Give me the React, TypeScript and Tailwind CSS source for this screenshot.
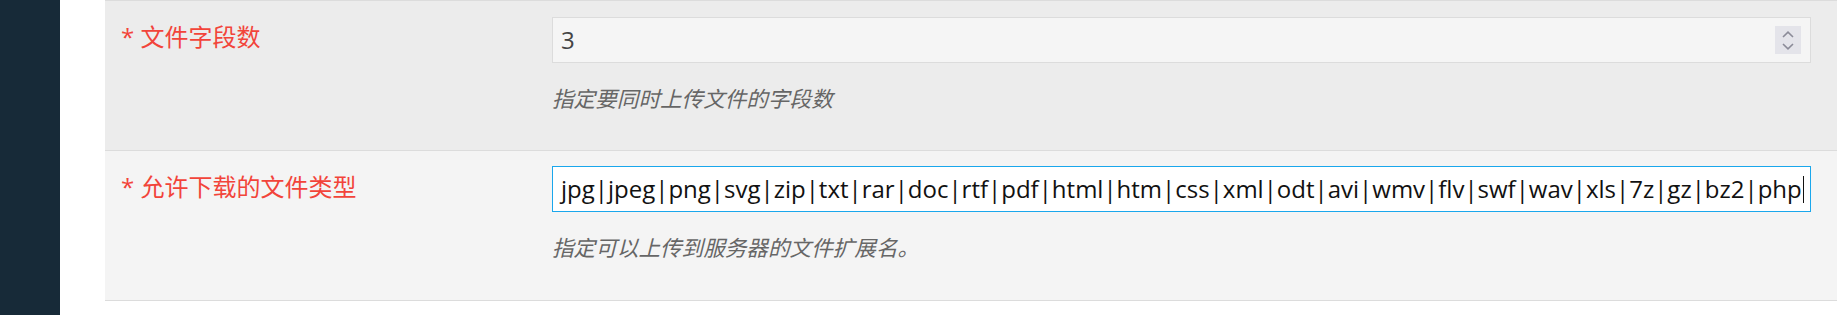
import React from "react";

const FONT = { fontFamily: '"Open Sans", "Noto Sans CJK SC", sans-serif' };

function Spinner() {
  return (
    <div className="absolute right-[9px] top-1/2 flex h-[28px] w-[26px] -translate-y-1/2 flex-col items-center justify-center gap-[5px] bg-[#e4e4ea]">
      <svg width="12" height="7" viewBox="0 0 12 7" fill="none">
        <path d="M1 6 L6 1.2 L11 6" stroke="#8b8b98" strokeWidth="1.6" />
      </svg>
      <svg width="12" height="7" viewBox="0 0 12 7" fill="none">
        <path d="M1 1 L6 5.8 L11 1" stroke="#8b8b98" strokeWidth="1.6" />
      </svg>
    </div>
  );
}

export default function App() {
  const types =
    "jpg|jpeg|png|svg|zip|txt|rar|doc|rtf|pdf|html|htm|css|xml|odt|avi|wmv|flv|swf|wav|xls|7z|gz|bz2|php";
  return (
    <div className="flex h-[315px] w-full bg-white" style={FONT}>
      <div className="h-full w-[60px] shrink-0 bg-[#172a38]" />
      <div className="w-[45px] shrink-0" />
      <div className="flex-1">
        <div className="flex h-[150px] border-t border-[#dcdcdc] bg-[#ececec]">
          <div className="w-[447px] shrink-0 pl-[16px] pt-[21px] text-[24px] leading-[30px] text-[#f2443a]">
            * 文件字段数
          </div>
          <div className="flex-1 pr-[26px] pt-[16px]">
            <div className="relative flex h-[46px] items-center border border-[#dcdcdc] bg-[#f5f5f5] pl-[8px] text-[24px] text-[#444]">
              3
              <Spinner />
            </div>
            <div className="mt-[21px] text-[21.6px] italic leading-[30px] text-[#666]">
              指定要同时上传文件的字段数
            </div>
          </div>
        </div>
        <div className="flex h-[151px] border-y border-[#dcdcdc] bg-[#f4f4f4]">
          <div className="w-[447px] shrink-0 pl-[16px] pt-[21px] text-[24px] leading-[30px] text-[#f2443a]">
            * 允许下载的文件类型
          </div>
          <div className="flex-1 pr-[26px] pt-[15px]">
            <div className="flex h-[46px] items-center border border-[#1aa7ec] bg-white pl-[8px] text-[24px] text-[#111]">
              <span className="whitespace-nowrap">{types}</span>
              <span className="ml-[1px] h-[27px] w-[1px] bg-[#111]" />
            </div>
            <div className="mt-[21px] text-[21.6px] italic leading-[30px] text-[#666]">
              指定可以上传到服务器的文件扩展名。
            </div>
          </div>
        </div>
      </div>
    </div>
  );
}
